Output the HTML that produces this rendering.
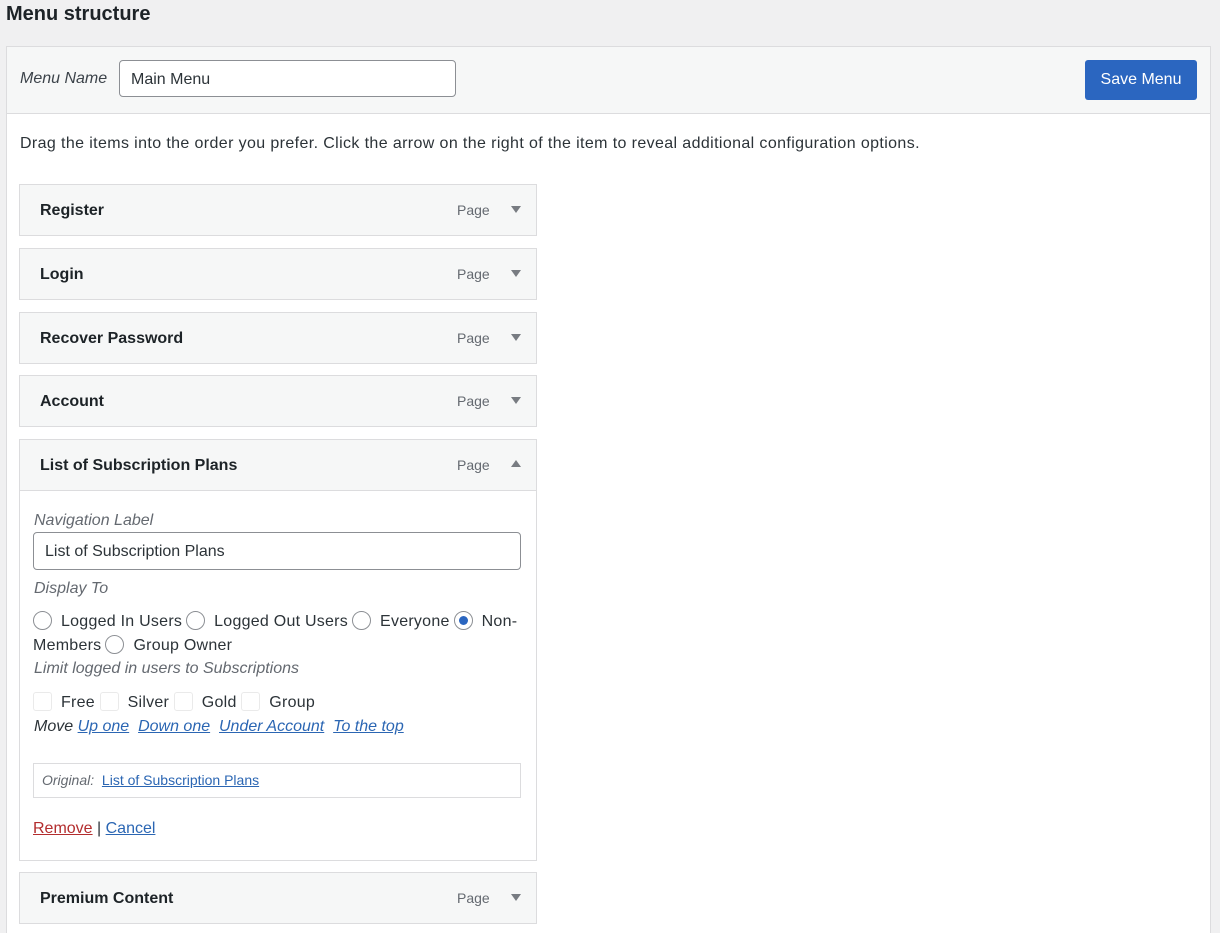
<!DOCTYPE html>
<html style="overflow:hidden;height:933px"><head><style>
*{box-sizing:border-box;margin:0;padding:0}
body{width:1220px;height:933px;overflow:hidden;background:#f0f0f1;font-family:"Liberation Sans","DejaVu Sans",sans-serif;color:#2c3338;font-size:16px;position:relative}
.a{position:absolute;white-space:nowrap}
h1{position:absolute;left:6px;top:3px;font-size:20px;font-weight:bold;color:#1d2327}
.panel{position:absolute;left:6px;top:46px;width:1205px;height:895px;border:1px solid #dcdcde;background:#fff}
.hdr{position:absolute;left:0;top:0;width:100%;height:67px;background:#f6f7f7;border-bottom:1px solid #dcdcde}
.inp{position:absolute;border:1px solid #8c8f94;border-radius:4px;background:#fff;padding-left:11px;display:flex;align-items:center;color:#2c3338;padding-top:2px}
.btn{position:absolute;left:1085px;top:60px;width:112px;height:40px;background:#2b66c0;border-radius:3px;color:#fff;display:flex;align-items:center;justify-content:center;font-size:16px}
.item{position:absolute;left:19px;width:518px;height:52px;border:1px solid #dcdcde;background:#f6f7f7}
.item b{position:absolute;left:20px;top:17px;font-size:16px;color:#1d2327}
.item .pg{position:absolute;left:437px;top:17px;font-size:14px;color:#646970}
.item .ar{position:absolute;left:491px;top:21px;width:0;height:0;border-left:5px solid transparent;border-right:5px solid transparent;border-top:7px solid #787c82}
.item .up{border-top:none;border-bottom:7px solid #787c82;top:20px}
i{color:#646970}
.r{display:inline-block;width:19px;height:19px;border:1px solid #8c8f94;border-radius:50%;vertical-align:-4px;margin-right:9px;position:relative}
.r.on::after{content:"";position:absolute;left:4px;top:4px;width:9px;height:9px;border-radius:50%;background:#2b66c0}
.c{display:inline-block;width:19px;height:19px;border:1px solid #eaeaea;border-radius:3px;vertical-align:-4px;margin-right:9px}
a{color:#2b66b3;text-decoration:underline}
.ls{letter-spacing:0.25px}
</style></head><body>
<h1>Menu structure</h1>
<div class="panel"><div class="hdr"></div></div>
<div class="a" style="left:20px;top:70px"><i style="color:#3c434a">Menu Name</i></div>
<div class="inp" style="left:119px;top:60px;width:337px;height:37px">Main Menu</div>
<div class="btn">Save Menu</div>
<div class="a" style="left:20px;top:135px;letter-spacing:0.38px">Drag the items into the order you prefer. Click the arrow on the right of the item to reveal additional configuration options.</div>

<div class="item" style="top:184px"><b>Register</b><span class="pg">Page</span><span class="ar"></span></div>
<div class="item" style="top:248px"><b>Login</b><span class="pg">Page</span><span class="ar"></span></div>
<div class="item" style="top:312px"><b>Recover Password</b><span class="pg">Page</span><span class="ar"></span></div>
<div class="item" style="top:375px"><b>Account</b><span class="pg">Page</span><span class="ar"></span></div>
<div class="item" style="top:439px"><b>List of Subscription Plans</b><span class="pg">Page</span><span class="ar up"></span></div>
<div class="a" style="left:19px;top:490px;width:518px;height:371px;border:1px solid #dcdcde;background:#fff"></div>
<div class="a" style="left:34px;top:512px"><i>Navigation Label</i></div>
<div class="inp" style="left:33px;top:532px;width:488px;height:38px">List of Subscription Plans</div>
<div class="a" style="left:34px;top:580px"><i>Display To</i></div>
<div class="a ls" style="left:33px;top:611px"><span class="r"></span>Logged In Users<span class="r" style="margin-left:4px"></span>Logged Out Users<span class="r" style="margin-left:4px"></span>Everyone<span class="r on" style="margin-left:4px"></span>Non-</div>
<div class="a ls" style="left:33px;top:635px">Members<span class="r" style="margin-left:4px"></span>Group Owner</div>
<div class="a" style="left:34px;top:660px"><i>Limit logged in users to Subscriptions</i></div>
<div class="a ls" style="left:33px;top:692px"><span class="c"></span>Free <span class="c"></span>Silver <span class="c"></span>Gold <span class="c"></span>Group</div>
<div class="a" style="left:34px;top:718px"><i style="color:#2c3338">Move</i>&nbsp;<a><i style="color:#2b66b3">Up one</i></a>&nbsp; <a><i style="color:#2b66b3">Down one</i></a>&nbsp; <a><i style="color:#2b66b3">Under Account</i></a>&nbsp; <a><i style="color:#2b66b3">To the top</i></a></div>
<div class="a" style="left:33px;top:763px;width:488px;height:35px;border:1px solid #dcdcde;padding:8px 0 0 8px;font-size:14px"><i>Original:</i>&nbsp; <a>List of Subscription Plans</a></div>
<div class="a" style="left:33px;top:820px"><a style="color:#b32d2e">Remove</a> | <a>Cancel</a></div>
<div class="item" style="top:872px"><b>Premium Content</b><span class="pg">Page</span><span class="ar"></span></div>
</body></html>
